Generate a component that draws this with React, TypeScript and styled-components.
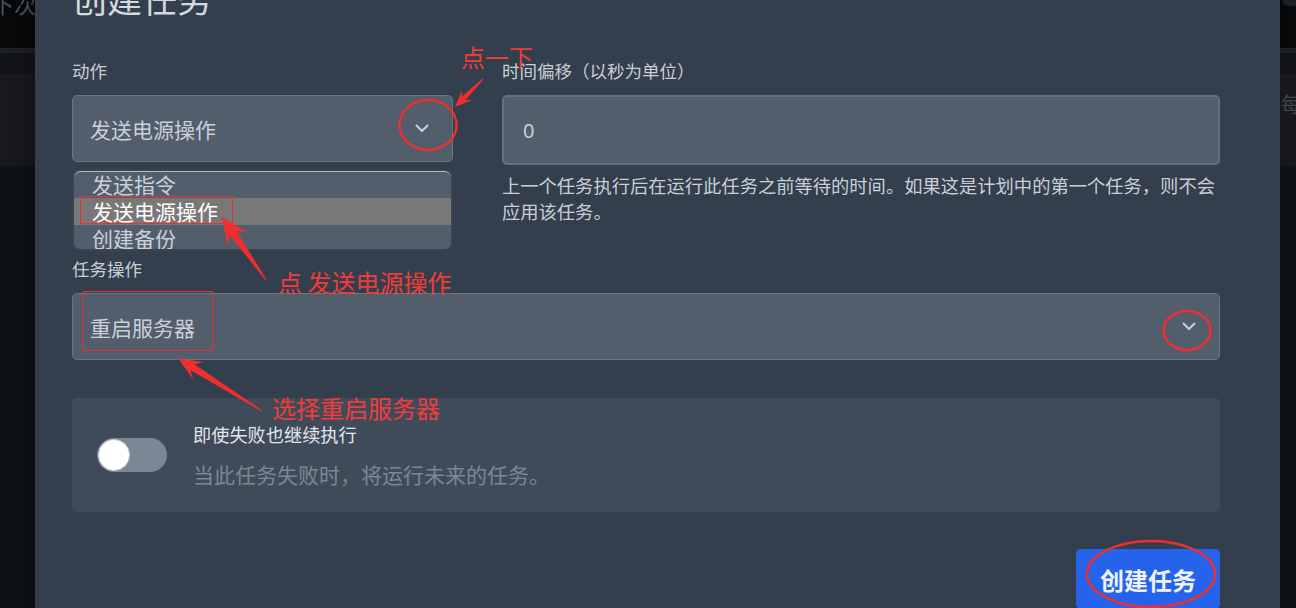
import { styled, createGlobalStyle } from 'styled-components';

const GlobalStyle = createGlobalStyle`
  html,
  body {
    margin: 0;
    padding: 0;
  }

  body {
    width: 1296px;
    height: 608px;
    overflow: hidden;
    background: #0e1115;
    font-family: 'Noto Sans CJK SC', 'Noto Sans', sans-serif;
  }
`;

const Page = styled.div`
  position: relative;
  width: 1296px;
  height: 608px;
  overflow: hidden;
  background: #0e1115;
`;

const TopBar = styled.header`
  height: 48px;
  display: flex;
  justify-content: space-between;
  align-items: flex-start;
  background: #07090b;
  border-bottom: 5px solid #1e2124;
`;

const TopText = styled.span`
  margin: -8px 0 0 -8px;
  font-size: 22px;
  line-height: 1;
  color: #4a525c;
`;

const TopButton = styled.div`
  width: 14px;
  height: 6px;
  border-radius: 0 0 0 6px;
  background: #1d2024;
`;

const SubBar = styled.div`
  height: 21px;
  background: #121417;
`;

const ListRow = styled.div`
  height: 92px;
  display: flex;
  justify-content: flex-end;
  padding-top: 20px;
  box-sizing: border-box;
  background: #17191c;
`;

const RowText = styled.span`
  margin-right: -5px;
  font-size: 20px;
  line-height: 1;
  color: #41464c;
`;

const Modal = styled.div`
  position: absolute;
  left: 35px;
  top: -40px;
  width: 1245px;
  height: 700px;
  box-sizing: border-box;
  padding: 20px 60px 0 37px;
  background: #333f4c;
  box-shadow: -6px 0 14px rgba(0, 0, 0, 0.25);
`;

const Title = styled.h2`
  margin: 0;
  font-size: 35px;
  font-weight: 400;
  line-height: 1;
  color: #d4d9df;
`;

const FieldGrid = styled.div`
  display: grid;
  grid-template-columns: 381px 1fr;
  column-gap: 49px;
  align-items: start;
  margin-top: 44px;
`;

const Field = styled.div<{ $gap?: number }>`
  display: flex;
  flex-direction: column;
  margin-top: ${(p) => p.$gap ?? 0}px;
`;

const Label = styled.label`
  margin-bottom: 12px;
  font-size: 17.5px;
  line-height: 24px;
  color: #c9cfd6;
`;

const SelectWrap = styled.div`
  position: relative;
`;

const SelectBox = styled.div`
  height: 67px;
  box-sizing: border-box;
  display: flex;
  align-items: center;
  justify-content: space-between;
  padding: 0 23px 0 17px;
  border: 1px solid #6a7684;
  border-radius: 5px;
  background: #525e6c;
  font-size: 21px;
  color: #c9d0d8;
`;

const OptionList = styled.ul`
  position: absolute;
  top: calc(100% + 7px);
  left: 0;
  right: 0;
  height: 82px;
  box-sizing: border-box;
  margin: 0;
  padding: 0;
  list-style: none;
  overflow: hidden;
  border: 2px solid #3a4450;
  border-radius: 8px;
  background: #525e6c;
  box-shadow: inset 0 1px 0 rgba(215, 221, 228, 0.75);
`;

const OptionItem = styled.li<{ $active?: boolean }>`
  height: 27px;
  padding-left: 18px;
  font-size: 21px;
  line-height: 27px;
  color: ${(p) => (p.$active ? '#ffffff' : '#c9d0d8')};
  background: ${(p) => (p.$active ? '#787878' : 'transparent')};
`;

const NumberInput = styled.input`
  height: 70px;
  box-sizing: border-box;
  padding: 0 19px;
  border: 2px solid #64707d;
  border-radius: 5px;
  background: #525e6c;
  font-family: 'Noto Sans', 'Noto Sans CJK SC', sans-serif;
  font-size: 20px;
  color: #c9d0d8;
  outline: none;
`;

const Help = styled.p`
  margin: 7px -8px 0 0;
  font-size: 18.3px;
  line-height: 26px;
  color: #c9cfd6;
`;

const ToggleCard = styled.div`
  height: 114px;
  box-sizing: border-box;
  display: flex;
  align-items: center;
  gap: 26px;
  margin-top: 38px;
  padding: 0 25px;
  border-radius: 5px;
  background: #3f4b59;
`;

const Track = styled.div`
  width: 70px;
  height: 34px;
  box-sizing: border-box;
  display: flex;
  align-items: center;
  padding: 1px;
  border-radius: 17px;
  background: #7b8794;
`;

const Knob = styled.div`
  width: 32px;
  height: 32px;
  box-sizing: border-box;
  border-radius: 50%;
  border: 1px solid #c5cbd2;
  background: #ffffff;
`;

const ToggleText = styled.div`
  display: flex;
  flex-direction: column;
  gap: 14px;
`;

const ToggleTitle = styled.span`
  font-size: 18.2px;
  line-height: 24px;
  color: #e3e7ec;
`;

const ToggleDesc = styled.span`
  font-size: 21px;
  line-height: 28px;
  color: #7b8794;
`;

const Footer = styled.div`
  display: flex;
  justify-content: flex-end;
  margin-top: 37px;
`;

const PrimaryButton = styled.button`
  height: 60px;
  padding: 0 24px;
  border: none;
  border-radius: 5px;
  background: #2563eb;
  font-family: 'Noto Sans CJK SC', sans-serif;
  font-size: 24px;
  font-weight: 700;
  color: #eef3ff;
`;

const Marks = styled.svg`
  position: absolute;
  top: 0;
  left: 0;
  pointer-events: none;
`;

const Note = styled.span<{ $x: number; $y: number }>`
  position: absolute;
  left: ${(p) => p.$x}px;
  top: ${(p) => p.$y}px;
  font-size: 24px;
  line-height: 1;
  white-space: pre;
  color: #f23b3b;
  pointer-events: none;
`;

const RED = '#ef2f2f';

const Chevron = () => (
  <svg width="14" height="9" viewBox="0 0 14 9">
    <path
      d="M1.5 1.5l5.5 5.5 5.5-5.5"
      fill="none"
      stroke="#c7d0da"
      strokeWidth="2"
      strokeLinecap="round"
      strokeLinejoin="round"
    />
  </svg>
);

// tapered arrow: thin tail, barbed head at the tip
const arrow = (
  tx: number,
  ty: number,
  px: number,
  py: number,
  head: number,
  headW: number,
  neckW: number,
) => {
  const len = Math.hypot(px - tx, py - ty);
  const ux = (px - tx) / len;
  const uy = (py - ty) / len;
  const nx = -uy;
  const ny = ux;
  const bx = px - ux * head;
  const by = py - uy * head;
  const kx = px - ux * head * 0.72;
  const ky = py - uy * head * 0.72;
  return [
    [tx + nx * 0.6, ty + ny * 0.6],
    [kx + nx * neckW, ky + ny * neckW],
    [bx + nx * headW, by + ny * headW],
    [px, py],
    [bx - nx * headW, by - ny * headW],
    [kx - nx * neckW, ky - ny * neckW],
    [tx - nx * 0.6, ty - ny * 0.6],
  ]
    .map(([x, y]) => `${x.toFixed(1)},${y.toFixed(1)}`)
    .join(' ');
};

const Annotations = () => (
  <>
    <Marks width="1296" height="608" viewBox="0 0 1296 608">
      <ellipse cx="428" cy="125" rx="28.5" ry="25" fill="none" stroke={RED} strokeWidth="2.5" />
      <ellipse cx="1187" cy="330.5" rx="23.5" ry="19.5" fill="none" stroke={RED} strokeWidth="2.5" />
      <ellipse cx="1151" cy="574" rx="64" ry="33" fill="none" stroke={RED} strokeWidth="2.5" />
      <rect x="80.5" y="196.5" width="152" height="27" fill="none" stroke={RED} strokeWidth="1" />
      <rect x="83.5" y="291.5" width="129" height="59" fill="none" stroke={RED} strokeWidth="1" />
      <polygon points={arrow(483, 79, 455, 107, 17, 7, 2.5)} fill={RED} />
      <polygon points={arrow(266, 280, 222, 217, 27, 12, 4)} fill={RED} />
      <polygon points={arrow(262, 411, 178, 358, 24, 10, 3.5)} fill={RED} />
    </Marks>
    <Note $x={461} $y={45}>点一下</Note>
    <Note $x={278} $y={270}>点 发送电源操作</Note>
    <Note $x={272} $y={396}>选择重启服务器</Note>
  </>
);

export default function App() {
  return (
    <>
      <GlobalStyle />
      <Page>
        <TopBar>
          <TopText>下次</TopText>
          <TopButton />
        </TopBar>
        <SubBar />
        <ListRow>
          <RowText>每</RowText>
        </ListRow>

        <Modal>
          <Title>创建任务</Title>
          <FieldGrid>
            <Field>
              <Label>动作</Label>
              <SelectWrap>
                <SelectBox>
                  <span>发送电源操作</span>
                  <Chevron />
                </SelectBox>
                <OptionList>
                  <OptionItem>发送指令</OptionItem>
                  <OptionItem $active>发送电源操作</OptionItem>
                  <OptionItem>创建备份</OptionItem>
                </OptionList>
              </SelectWrap>
            </Field>
            <Field>
              <Label>时间偏移（以秒为单位）</Label>
              <NumberInput value="0" readOnly />
              <Help>
                上一个任务执行后在运行此任务之前等待的时间。如果这是计划中的第一个任务，则不会应用该任务。
              </Help>
            </Field>
          </FieldGrid>

          <Field $gap={33}>
            <Label>任务操作</Label>
            <SelectBox>
              <span>重启服务器</span>
              <Chevron />
            </SelectBox>
          </Field>

          <ToggleCard>
            <Track>
              <Knob />
            </Track>
            <ToggleText>
              <ToggleTitle>即使失败也继续执行</ToggleTitle>
              <ToggleDesc>当此任务失败时，将运行未来的任务。</ToggleDesc>
            </ToggleText>
          </ToggleCard>

          <Footer>
            <PrimaryButton>创建任务</PrimaryButton>
          </Footer>
        </Modal>

        <Annotations />
      </Page>
    </>
  );
}
